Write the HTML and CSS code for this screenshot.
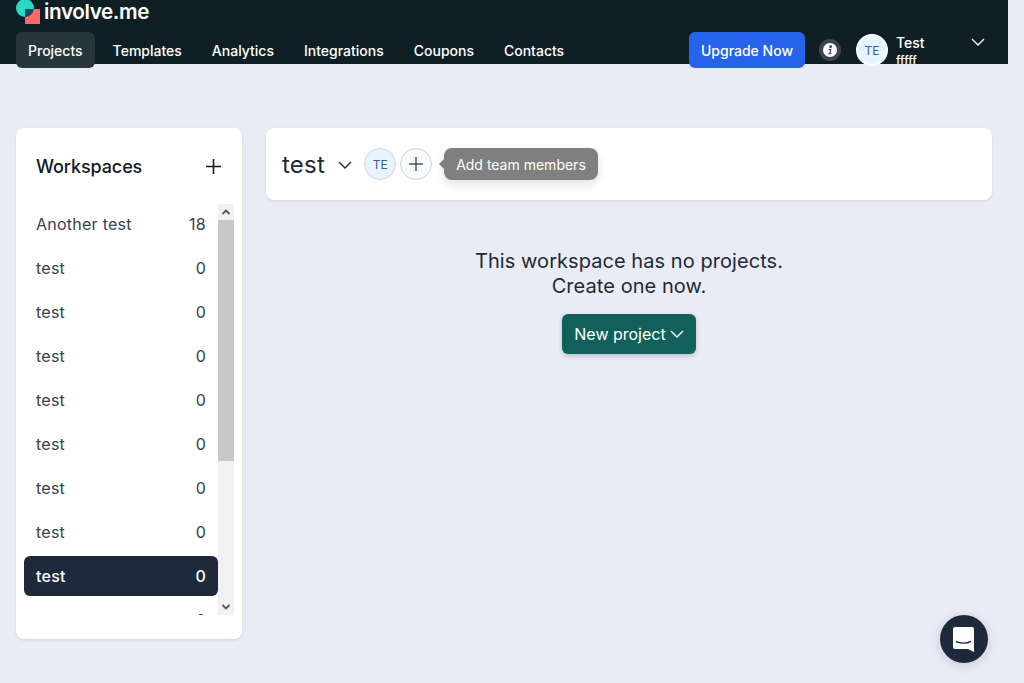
FILE: index.html
```html
<!DOCTYPE html>
<html lang="en">

<head>
    <meta charset="UTF-8">
    <meta name="viewport" content="width=device-width, initial-scale=1.0">
    <title>involve.me</title>
    <link rel="stylesheet" href="styles.css">
</head>

<body>
    <header class="topbar">
        <div class="logo-row">
            <svg class="logo-mark" width="24" height="24" viewBox="0 0 24 24">
                <circle cx="9" cy="8" r="9" fill="#2ad9c3"/>
                <rect x="9" y="9" width="15" height="15" fill="#fb6a6a"/>
                <path d="M9 9h8.900a9 9 0 0 1-8.900 8z" fill="#1f4a5c"/>
            </svg>
            <span class="logo-text">involve.me</span>
        </div>
        <div class="nav-row">
            <nav class="nav">
                <a class="nav-link active">Projects</a>
                <a class="nav-link">Templates</a>
                <a class="nav-link">Analytics</a>
                <a class="nav-link">Integrations</a>
                <a class="nav-link">Coupons</a>
                <a class="nav-link">Contacts</a>
            </nav>
            <div class="nav-right">
                <button class="upgrade" type="button">Upgrade Now</button>
                <span class="info">
                    <svg width="14" height="14" viewBox="0 0 14 14">
                        <circle cx="7" cy="7" r="7" fill="#fff"/>
                        <circle cx="7.600" cy="3.700" r="1.400" fill="#3f4649"/>
                        <path d="M5.500 6h3l-1 4.200h1v1H5.300v-1h.9l.7-3.200H5.500z" fill="#3f4649"/>
                    </svg>
                </span>
                <span class="user-avatar">TE</span>
                <div class="user-text">
                    <div>Test</div>
                    <div>fffff</div>
                </div>
                <svg class="user-chevron" width="14" height="8" viewBox="0 0 14 8">
                    <path d="M1 1l6 6 6-6" fill="none" stroke="#fff" stroke-width="1.300"/>
                </svg>
            </div>
        </div>
    </header>

    <main class="page">
        <aside class="sidebar">
            <div class="sidebar-head">
                <h2>Workspaces</h2>
                <svg width="15" height="15" viewBox="0 0 15 15">
                    <path d="M7.500 0v15M0 7.500h15" stroke="#111827" stroke-width="1.600"/>
                </svg>
            </div>
            <div class="list-wrap">
                <ul class="list">
                    <li class="item"><span>Another test</span><span>18</span></li>
                    <li class="item"><span>test</span><span>0</span></li>
                    <li class="item"><span>test</span><span>0</span></li>
                    <li class="item"><span>test</span><span>0</span></li>
                    <li class="item"><span>test</span><span>0</span></li>
                    <li class="item"><span>test</span><span>0</span></li>
                    <li class="item"><span>test</span><span>0</span></li>
                    <li class="item"><span>test</span><span>0</span></li>
                    <li class="item selected"><span>test</span><span>0</span></li>
                    <li class="item"><span>test</span><span>0</span></li>
                </ul>
                <div class="scrollbar">
                    <svg class="arrow" width="16" height="16" viewBox="0 0 16 16">
                        <path d="M4.500 10L8 6.500l3.500 3.500" fill="none" stroke="#555" stroke-width="1.800"/>
                    </svg>
                    <div class="thumb"></div>
                    <svg class="arrow" width="16" height="16" viewBox="0 0 16 16">
                        <path d="M4.500 6L8 9.500 11.500 6" fill="none" stroke="#555" stroke-width="1.800"/>
                    </svg>
                </div>
            </div>
        </aside>

        <section class="content">
            <div class="workspace-bar">
                <span class="workspace-name">test</span>
                <svg class="workspace-chevron" width="14" height="8" viewBox="0 0 14 8">
                    <path d="M1 1l6 6 6-6" fill="none" stroke="#1f2937" stroke-width="1.400"/>
                </svg>
                <span class="member">TE</span>
                <span class="member add">
                    <svg width="14" height="14" viewBox="0 0 14 14">
                        <path d="M7 0v14M0 7h14" stroke="#4b5563" stroke-width="1.500"/>
                    </svg>
                </span>
                <span class="tooltip">Add team members</span>
            </div>
            <div class="empty">
                <p>This workspace has no projects.<br>Create one now.</p>
                <button class="new-project" type="button">
                    New project
                    <svg width="14" height="8" viewBox="0 0 14 8">
                        <path d="M1 1l6 6 6-6" fill="none" stroke="#fff" stroke-width="1.400"/>
                    </svg>
                </button>
            </div>
        </section>
    </main>

    <button class="chat" type="button">
        <svg width="22" height="26" viewBox="0 0 22 26">
            <path d="M2 1h17a2 2 0 0 1 2 2v23l-6-3H2a2 2 0 0 1-2-2V3a2 2 0 0 1 2-2z" fill="#fff"/>
            <path d="M3 15.500q7.500 3.200 15 0" fill="none" stroke="#1e2a3c" stroke-width="1.400"/>
        </svg>
    </button>
</body>

</html>
```

FILE: styles.css
```css
* {
    box-sizing: border-box;
}

html,
body {
    height: 100%;
}

body {
    margin: 0;
    background-color: #e9ecf5;
    color: #1f2937;
    font-family: 'Inter', sans-serif;
    overflow: hidden;
}

.topbar {
    width: 1008px;
    height: 64px;
    background-color: #101f26;
    padding: 0 16px;
}

.logo-row {
    display: flex;
    align-items: flex-start;
    height: 32px;
}

.logo-mark {
    flex: none;
}

.logo-text {
    margin-left: 4px;
    color: #fff;
    font-size: 20.700px;
    font-weight: 600;
    line-height: 23px;
    letter-spacing: -0.400px;
}

.nav-row {
    display: flex;
    justify-content: space-between;
    height: 36px;
}

.nav {
    display: flex;
    gap: 6px;
}

.nav-link {
    display: flex;
    align-items: center;
    height: 36px;
    padding: 0 12px;
    border-radius: 6px;
    color: #fff;
    font-size: 14px;
    font-weight: 500;
}

.nav-link.active {
    background-color: #27363d;
}

.nav-right {
    display: flex;
    align-items: flex-start;
}

.upgrade {
    height: 36px;
    padding: 0 12px;
    border: none;
    border-radius: 6px;
    background-color: #2563eb;
    color: #fff;
    font-family: inherit;
    font-size: 14px;
    font-weight: 500;
}

.info {
    display: flex;
    align-items: center;
    justify-content: center;
    width: 22px;
    height: 22px;
    margin: 7px 0 0 14px;
    border-radius: 50%;
    background-color: #3f4649;
}

.user-avatar {
    display: flex;
    align-items: center;
    justify-content: center;
    width: 32px;
    height: 32px;
    margin: 2px 0 0 15px;
    border-radius: 50%;
    border: 2px solid #fff;
    background-color: #e8f4fd;
    color: #3b5f8f;
    font-size: 12px;
}

.user-text {
    width: 75px;
    height: 32px;
    margin-left: 8px;
    overflow: hidden;
    color: #fff;
    font-size: 14px;
    font-weight: 500;
    line-height: 22px;
}

.user-text div + div {
    font-size: 12px;
    line-height: 14px;
}

.user-chevron {
    margin: 6px 7px 0 0;
}

.page {
    display: flex;
    gap: 24px;
    padding: 64px 32px 0 16px;
}

.sidebar {
    width: 226px;
    height: 511px;
    background-color: #fff;
    border-radius: 8px;
    box-shadow: 0 1px 3px rgba(0, 0, 0, 0.1);
    padding: 0 8px;
}

.sidebar-head {
    display: flex;
    align-items: center;
    justify-content: space-between;
    height: 76px;
    padding: 0 13px 0 12px;
}

.sidebar-head h2 {
    margin: 0;
    color: #111827;
    font-size: 18px;
    font-weight: 500;
    letter-spacing: -0.100px;
}

.list-wrap {
    position: relative;
    width: 210px;
    height: 411px;
    margin-right: -8px;
    display: flex;
    overflow: hidden;
}

.list {
    flex: none;
    width: 194px;
    margin: 0;
    padding: 0;
    list-style: none;
}

.item {
    display: flex;
    align-items: center;
    justify-content: space-between;
    height: 40px;
    margin-bottom: 4px;
    padding: 0 12px;
    border-radius: 6px;
    color: #374151;
    font-size: 16px;
    letter-spacing: 0.250px;
}

.item.selected {
    background-color: #1e2a3c;
    color: #fff;
    font-weight: 500;
}

.scrollbar {
    display: flex;
    flex-direction: column;
    width: 16px;
    height: 411px;
    background-color: #f1f1f1;
}

.arrow {
    flex: none;
}

.thumb {
    height: 241px;
    margin-bottom: auto;
    background-color: #c8c8c8;
}

.content {
    width: 726px;
}

.workspace-bar {
    display: flex;
    align-items: center;
    height: 72px;
    padding: 0 16px;
    background-color: #fff;
    border-radius: 8px;
    box-shadow: 0 1px 3px rgba(0, 0, 0, 0.1);
}

.workspace-name {
    color: #1f2937;
    font-size: 24px;
    letter-spacing: 0.250px;
}

.workspace-chevron {
    margin: 2px 12px 0 13px;
}

.member {
    display: flex;
    align-items: center;
    justify-content: center;
    width: 32px;
    height: 32px;
    border: 1px solid #d1d5db;
    border-radius: 50%;
    background-color: #e8f4fd;
    color: #3b5f8f;
    font-size: 12px;
}

.member.add {
    margin-left: 4px;
    background-color: #f9fafb;
}

.tooltip {
    position: relative;
    display: flex;
    align-items: center;
    height: 32px;
    margin-left: 12px;
    padding: 0 12px;
    border-radius: 8px;
    background-color: #808080;
    box-shadow: 0 4px 10px rgba(0, 0, 0, 0.12);
    color: #fff;
    font-size: 14px;
}

.tooltip::before {
    content: "";
    position: absolute;
    left: -5px;
    top: 11px;
    border-top: 5px solid transparent;
    border-bottom: 5px solid transparent;
    border-right: 5px solid #808080;
}

.empty {
    margin-top: 49px;
    text-align: center;
}

.empty p {
    margin: 0;
    color: #1f2937;
    font-size: 20px;
    line-height: 25px;
    letter-spacing: 0.060px;
}

.new-project {
    display: inline-flex;
    align-items: center;
    gap: 4px;
    height: 40px;
    margin-top: 15px;
    padding: 0 12px;
    border: none;
    border-radius: 6px;
    background-color: #12605a;
    box-shadow: 0 2px 5px rgba(0, 0, 0, 0.2);
    color: #fff;
    font-family: inherit;
    font-size: 16px;
}

.chat {
    position: fixed;
    right: 36px;
    bottom: 20px;
    display: flex;
    align-items: center;
    justify-content: center;
    width: 48px;
    height: 48px;
    padding: 0;
    border: none;
    border-radius: 50%;
    background-color: #1e2a3c;
    box-shadow: 0 2px 12px rgba(0, 0, 0, 0.15);
}
```
